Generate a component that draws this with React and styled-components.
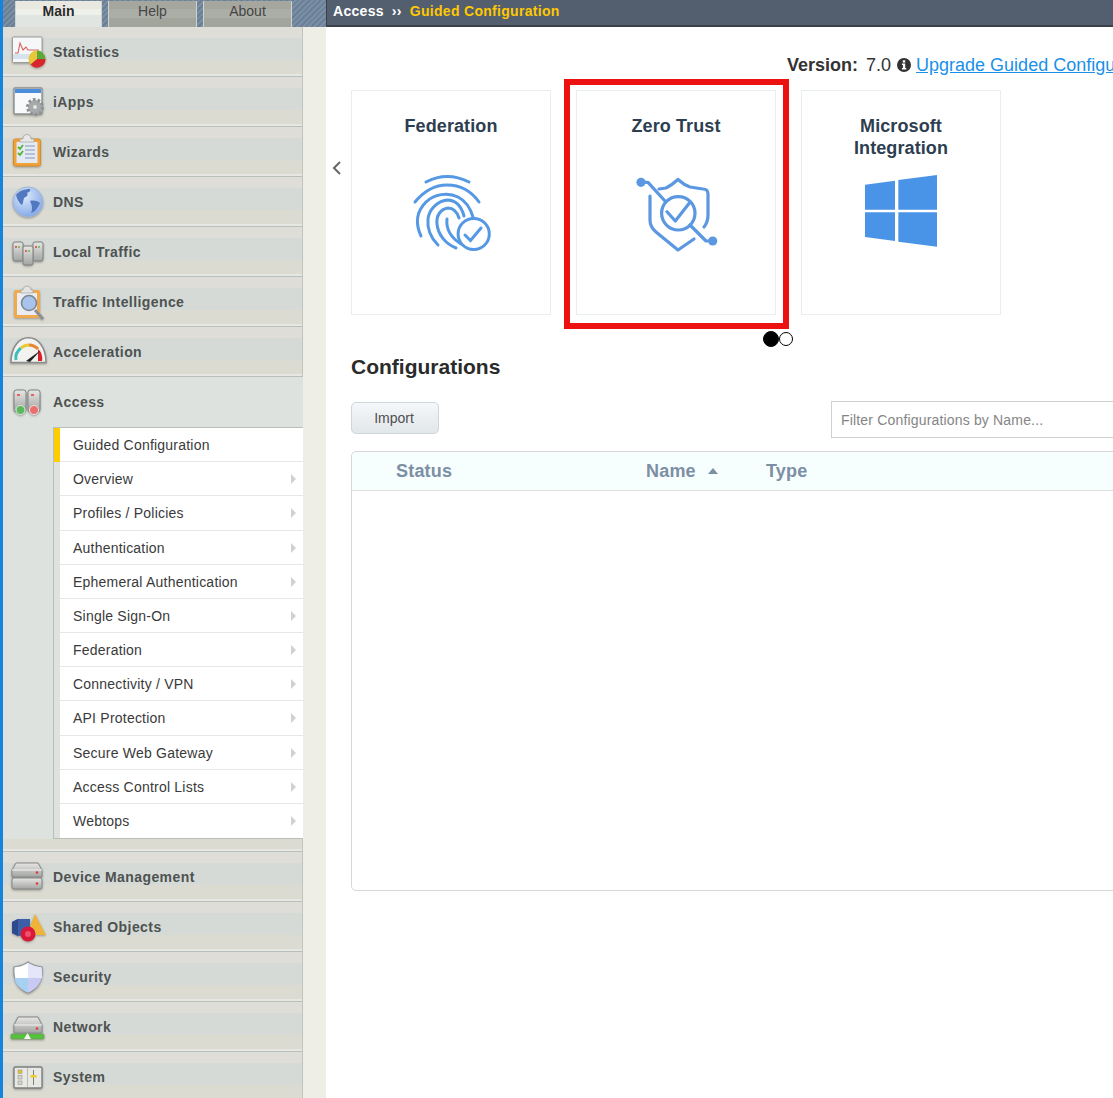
import React from 'react';
import styled, { createGlobalStyle } from 'styled-components';

const Global = createGlobalStyle`
  html, body { margin: 0; padding: 0; background: #fff; }
  body { font-family: "Liberation Sans", Arial, sans-serif; }
  * { box-sizing: border-box; }
`;

const Page = styled.div`
  display: flex;
  width: 1113px;
  height: 1098px;
  overflow: hidden;
`;

const Sidebar = styled.aside`
  flex: 0 0 326px;
  display: flex;
  flex-direction: column;
  height: 100%;
  overflow: hidden;
  background: #eeeee6;
  border-left: 3px solid #1484dd;
`;

const TabBar = styled.div`
  flex: 0 0 27px;
  display: flex;
  gap: 6px;
  padding: 1px 0 0 12px;
  background: repeating-linear-gradient(135deg, #6b8097 0 2px, #7a8ea4 2px 4px);
`;

const Tab = styled.div`
  width: ${p => p.$w}px;
  height: 26px;
  display: flex;
  align-items: center;
  justify-content: center;
  font-size: 14px;
  padding-bottom: 6px;
  border-left: 1px solid #cfd3cf;
  border-right: 1px solid #cfd3cf;
  color: ${p => (p.$active ? '#2b2b2b' : '#454545')};
  font-weight: ${p => (p.$active ? 700 : 400)};
  background: ${p =>
    p.$active
      ? 'linear-gradient(#e9e9e2 0 30%, #eef0ea 30% 55%, #e1e5e1 55%)'
      : 'linear-gradient(#a5a69e 0 30%, #abaea6 30% 65%, #a2a59c 65%)'};
`;

const Nav = styled.nav`
  width: 300px;
  display: flex;
  flex-direction: column;
`;

const Row = styled.div`
  flex: 0 0 50px;
  height: 50px;
  display: flex;
  align-items: center;
  gap: 1px;
  padding-left: 5px;
  border-right: 1px solid #bfc4bf;
  border-bottom: 1px solid #b9bfba;
  box-shadow: inset 0 -2px 0 #e6e7e2;
  background: ${p =>
    p.$open
      ? '#dde2de'
      : 'linear-gradient(#dfddd8 0 11px, #d5dad7 11px 33px, #dbdbd2 33px)'};
  ${p => p.$open && 'border-bottom: none; box-shadow: none; border-right: none;'}
`;

const IconFrame = styled.svg`
  flex: 0 0 44px;
  width: 44px;
  height: 44px;
  filter: drop-shadow(0 1px 1px rgba(0, 0, 0, 0.3));
`;

const RowLabel = styled.span`
  font-size: 14px;
  font-weight: 700;
  letter-spacing: 0.42px;
  color: #4e5250;
  white-space: nowrap;
`;

const Group = styled.div`
  display: flex;
  flex-direction: column;
  background: #dde2de;
`;

const SubMenu = styled.ul`
  list-style: none;
  margin: 0 0 0 50px;
  padding: 0;
  height: 412px;
  display: flex;
  flex-direction: column;
  border-left: 1px solid #b9bfba;
  border-top: 1px solid #b9bfba;
  border-bottom: 1px solid #b9bfba;
`;

const SubItem = styled.li`
  flex: 1;
  display: flex;
  align-items: center;
  justify-content: space-between;
  padding: 0 7px 0 13px;
  font-size: 14px;
  letter-spacing: 0.22px;
  color: #3a3a3a;
  background: #fff;
  border-left: 6px solid ${p => (p.$active ? '#ffcc00' : '#dde2de')};
  box-shadow: inset 0 -1px 0 #e6e8e6;
  &:last-child { box-shadow: none; }
`;

const SubArrow = styled.span`
  width: 0;
  height: 0;
  border-left: 5px solid #cfd2d0;
  border-top: 5px solid transparent;
  border-bottom: 5px solid transparent;
`;

const GroupFoot = styled.div`
  height: 13px;
  background: #dbdbd2;
  border-bottom: 1px solid #b9bfba;
  box-shadow: inset 0 -2px 0 #e6e7e2;
  border-right: 1px solid #bfc4bf;
`;

const Main = styled.main`
  flex: 1;
  min-width: 0;
  display: flex;
  flex-direction: column;
  overflow: hidden;
`;

const Crumbs = styled.div`
  flex: 0 0 27px;
  display: flex;
  align-items: center;
  gap: 8px;
  padding: 0 0 3px 6px;
  background: #535f6f;
  border-bottom: 2px solid #3b4148;
  border-left: 1px solid #3b4148;
  font-size: 14px;
  font-weight: 700;
  letter-spacing: 0.3px;
  color: #fff;
  white-space: nowrap;
`;

const CrumbActive = styled.span`
  color: #ffc800;
`;

const VersionRow = styled.div`
  display: flex;
  align-items: center;
  gap: 6px;
  height: 63px;
  padding: 13px 0 0 461px;
  font-size: 18px;
  color: #333;
  white-space: nowrap;
`;

const VersionLabel = styled.b`
  font-weight: 700;
  margin-right: 2px;
`;

const InfoIcon = styled.svg`
  flex: 0 0 14px;
  width: 14px;
  height: 14px;
`;

const UpgradeLink = styled.a`
  flex: none;
  margin-left: -1px;
  color: #1a90e8;
  text-decoration: underline;
`;

const Carousel = styled.div`
  display: flex;
`;

const Chevron = styled.svg`
  flex: 0 0 25px;
  width: 25px;
  height: 20px;
  margin-top: 68px;
`;

const Cards = styled.div`
  display: flex;
  gap: 25px;
`;

const Card = styled.div`
  position: relative;
  width: 200px;
  height: 225px;
  padding-top: 24px;
  display: flex;
  flex-direction: column;
  align-items: center;
  border: 1px solid #e8eeee;
  ${p =>
    p.$flagged &&
    `&::after {
      content: "";
      position: absolute;
      left: -13px; right: -14px; top: -12px; bottom: -15px;
      border: 6px solid #ec1212;
    }`}
`;

const CardTitle = styled.h3`
  margin: 0;
  width: 150px;
  height: 44px;
  font-size: 18px;
  line-height: 22px;
  font-weight: 700;
  letter-spacing: 0.1px;
  color: #2d3e50;
  text-align: center;
`;

const CardIcon = styled.svg`
  width: 100px;
  height: 95px;
  margin-top: 6px;
`;

const Dots = styled.div`
  display: flex;
  align-items: center;
  height: 16px;
  margin-top: 16px;
  padding-left: 437px;
`;

const Dot = styled.span`
  width: ${p => (p.$on ? 16 : 14)}px;
  height: ${p => (p.$on ? 16 : 14)}px;
  border-radius: 50%;
  background: ${p => (p.$on ? '#000' : '#fff')};
  border: 1px solid #000;
`;

const Panel = styled.section`
  width: 820px;
  margin-left: 25px;
`;

const Heading = styled.h2`
  margin: 7px 0 0;
  height: 26px;
  font-size: 21px;
  line-height: 26px;
  font-weight: 700;
  color: #2b2b2b;
`;

const Toolbar = styled.div`
  display: flex;
  justify-content: space-between;
  align-items: flex-start;
  margin-top: 21px;
  height: 50px;
`;

const ImportButton = styled.button`
  width: 88px;
  height: 32px;
  margin-top: 1px;
  padding: 0 2px 0 0;
  border: 1px solid #cfd6da;
  border-radius: 5px;
  background: linear-gradient(#f5f7f9, #e2e7ea);
  font: 14px "Liberation Sans", Arial, sans-serif;
  color: #4f4f4f;
`;

const FilterInput = styled.input`
  width: 340px;
  height: 37px;
  padding: 0 9px;
  border: 1px solid #d0d0d0;
  font: 14px "Liberation Sans", Arial, sans-serif;
  letter-spacing: 0.17px;
  &::placeholder { color: #858585; opacity: 1; }
`;

const Table = styled.div`
  height: 440px;
  border: 1px solid #d6d8d8;
  border-radius: 5px;
`;

const TableHead = styled.div`
  display: grid;
  grid-template-columns: 250px 120px 1fr;
  align-items: center;
  height: 39px;
  padding-left: 44px;
  background: #f7fefe;
  border-bottom: 1px solid #dcdfdf;
  border-radius: 5px 5px 0 0;
  font-size: 18px;
  font-weight: 700;
  letter-spacing: 0.2px;
  color: #7c8fa4;
`;

const HeadCell = styled.span`
  display: flex;
  align-items: center;
  gap: 12px;
`;

const SortUp = styled.i`
  width: 0;
  height: 0;
  border-left: 5.5px solid transparent;
  border-right: 5.5px solid transparent;
  border-bottom: 6px solid #7c8fa4;
`;

const Fingerprint = () => (
  <CardIcon viewBox="0 0 100 95" fill="none" stroke="#5598e4" strokeWidth="3" strokeLinecap="round">
    <path d="M25 17Q46 6 68 17" />
    <path d="M14 37Q28 20 46 20Q66 20 78 37" />
    <path d="M20 71C14 58 16 46 25 37C33 29 47 27 57 32C65 36 69 42 72 52" />
    <path d="M37 80C30 73 26 64 27 54C28 44 37 36 46 35C54 35 60 40 63 51" />
    <path d="M55 83C45 79 37 70 36 59C35 50 40 44 47 43C52 43 56 47 58 53" />
    <path d="M46 54C45 63 49 72 60 79" />
    <circle cx="72.7" cy="69" r="15.6" fill="#fff" />
    <path d="M64 70L69.5 75.5L80 63" />
  </CardIcon>
);

const ZeroTrust = () => (
  <CardIcon viewBox="0 0 100 95" fill="none" stroke="#5c97e2" strokeWidth="3.2" strokeLinecap="round" strokeLinejoin="round">
    <path d="M15 17.3L22 17.3L39 36" />
    <path d="M33 24L40 23Q46 20 52 14.5Q58 20 64 22L77 24Q82 24 82 29L82 50Q82 57 78 62" />
    <path d="M24 31L24 55Q24 62 30 67L52 85L68 74" />
    <circle cx="52.3" cy="48.3" r="16.7" />
    <path d="M41 46.7L49.3 56L64 37.3" />
    <path d="M64 60L80 76L87 76" />
    <circle cx="15" cy="17.3" r="4.6" fill="#5c97e2" stroke="none" />
    <circle cx="86.7" cy="76" r="4.6" fill="#5c97e2" stroke="none" />
  </CardIcon>
);

const Windows = () => (
  <CardIcon viewBox="0 -30 300 285" fill="#4a94e8">
    <polygon points="42,29 132,17 132,104 42,104" />
    <polygon points="142,15 258,0 258,104 142,104" />
    <polygon points="42,112 132,112 132,198 42,186" />
    <polygon points="142,112 258,112 258,215 142,200" />
  </CardIcon>
);

const MetalGrad = ({ id }) => (
  <linearGradient id={id} x1="0" y1="0" x2="0" y2="1">
    <stop offset="0" stopColor="#e6e6e4" />
    <stop offset="1" stopColor="#a3a5a3" />
  </linearGradient>
);

const icons = {
  statistics: (
    <>
      <rect x="4.5" y="7" width="29.5" height="25.5" rx="1" fill="#f6f7f8" stroke="#9a9c9a" />
      <rect x="5" y="24" width="29" height="5" fill="#d6e3ee" />
      <path d="M7 23L10 23L12 13L15 20L18 17L20 20L31 20" fill="none" stroke="#d9605e" strokeWidth="1.1" />
      <circle cx="29" cy="29" r="8.5" fill="#e8c83a" />
      <path d="M29 29L29 20.5A8.5 8.5 0 0 1 37.5 29Z" fill="#5da83c" />
      <path d="M29 29L37.5 29A8.5 8.5 0 0 1 22.5 34.5Z" fill="#d8262f" />
    </>
  ),
  iapps: (
    <>
      <rect x="6" y="8" width="28" height="26" rx="1" fill="#f8f9fb" stroke="#8d8f8f" strokeWidth="1.4" />
      <rect x="7" y="9" width="26" height="4" fill="#4b8fdc" />
      <circle cx="27" cy="27" r="7" fill="#a6aaaa" stroke="#8f9292" strokeWidth="4" strokeDasharray="2.5 1.9" />
      <circle cx="27" cy="27" r="6" fill="#a6aaaa" />
      <circle cx="27" cy="27" r="2" fill="#e4e6e6" />
    </>
  ),
  wizards: (
    <>
      <rect x="5.5" y="9" width="27" height="27" rx="2" fill="#f0a238" stroke="#d98d28" />
      <rect x="8.5" y="12" width="21" height="21" fill="#e4eaf3" />
      <path d="M15 9C15 3 23 3 23 9L26 9L26 12L12 12L12 9Z" fill="#e8e8e6" stroke="#a5a5a5" strokeWidth=".7" />
      <path d="M10 17L12 19L15 15M10 23L12 25L15 21" fill="none" stroke="#53b32a" strokeWidth="1.8" />
      <path d="M17 16H27M17 20H27M17 24H27M17 28H27" stroke="#a5b3cb" strokeWidth="1.4" />
    </>
  ),
  dns: (
    <>
      <defs>
        <radialGradient id="globe" cx=".4" cy=".3" r=".8">
          <stop offset="0" stopColor="#dbe8fb" />
          <stop offset="1" stopColor="#7ba3e6" />
        </radialGradient>
      </defs>
      <circle cx="20" cy="22" r="15" fill="url(#globe)" stroke="#a2b6d6" />
      <path d="M8 15C11 11 16 9 22 9C23 11 21 12 19 13C21 15 18 17 16 18C15 21 15 24 14 25C11 23 9 19 8 15Z" fill="#5278c0" />
      <path d="M22 21C26 20 30 21 32 23C31 26 29 28 27 31C25 32 24 33 23 33C25 29 24 25 22 21Z" fill="#5278c0" />
    </>
  ),
  traffic: (
    <>
      <defs><MetalGrad id="m1" /></defs>
      <rect x="5" y="12" width="10" height="19" rx="2" fill="url(#m1)" stroke="#7f8280" />
      <rect x="25" y="12" width="10" height="19" rx="2" fill="url(#m1)" stroke="#7f8280" />
      <rect x="15" y="16" width="10" height="19" rx="2" fill="url(#m1)" stroke="#7f8280" />
      <path d="M7 17h2M27 17h2M17 21h2" stroke="#e0413f" strokeWidth="1.6" />
      <path d="M10 17h2M30 17h2M20 21h2" stroke="#5fbf46" strokeWidth="1.6" />
    </>
  ),
  intel: (
    <>
      <rect x="6" y="10" width="26" height="28" rx="2" fill="#f0a94e" />
      <rect x="9" y="13" width="20" height="22" fill="#e9edf3" />
      <path d="M15 10C15 5 23 5 23 10L25 10L25 13L13 13L13 10Z" fill="#e4e4e2" stroke="#a5a5a5" strokeWidth=".7" />
      <path d="M27 30L35 39" stroke="#8b9096" strokeWidth="3" />
      <circle cx="21" cy="23" r="7.5" fill="#a8c4ec" stroke="#7d8791" strokeWidth="1.6" />
    </>
  ),
  accel: (
    <>
      <path d="M3 33C3 -0 38 -0 38 33Z" fill="#f2f2f0" stroke="#8b8d8b" strokeWidth="1.5" transform="translate(0 -.5)" />
      <path d="M8 30A12.5 12.5 0 0 1 13 18" fill="none" stroke="#38c0b8" strokeWidth="3" />
      <path d="M13 18A12.5 12.5 0 0 1 21 15" fill="none" stroke="#e8cc36" strokeWidth="3" />
      <path d="M21 15A12.5 12.5 0 0 1 30 19" fill="none" stroke="#e8862f" strokeWidth="3" />
      <path d="M30 19A13 13 0 0 1 34 31L30 31Z" fill="#d8222a" />
      <path d="M18 31L33 20L22 32Z" fill="#222" />
    </>
  ),
  access: (
    <>
      <defs><MetalGrad id="m2" /></defs>
      <rect x="6" y="10" width="12" height="22" rx="2.5" fill="url(#m2)" stroke="#7f8280" />
      <rect x="20" y="10" width="12" height="22" rx="2.5" fill="url(#m2)" stroke="#7f8280" />
      <path d="M9 15h3M23 15h3" stroke="#e0413f" strokeWidth="1.4" />
      <circle cx="12.5" cy="30" r="4.5" fill="#5cb85c" stroke="#dfe8df" />
      <circle cx="26" cy="30" r="4.5" fill="#e8706c" stroke="#f0dfdd" />
    </>
  ),
  device: (
    <>
      <defs><MetalGrad id="m3" /></defs>
      <path d="M4 15L8 8L30 8L34 15L34 22L4 22Z" fill="url(#m3)" stroke="#868886" />
      <path d="M4 15H34" stroke="#f3f3f2" />
      <rect x="4" y="23" width="30" height="11" rx="2" fill="url(#m3)" stroke="#868886" />
      <circle cx="29" cy="17.5" r="1.3" fill="#e03a38" />
      <circle cx="29" cy="28.5" r="1.3" fill="#e03a38" />
    </>
  ),
  shared: (
    <>
      <path d="M27 9L38 30L19 30Z" fill="#efb33a" />
      <path d="M4 17L10 14L22 14L22 30L10 31L4 28Z" fill="#3d5fa8" />
      <path d="M4 17L10 14L10 31L4 28Z" fill="#2d4a8c" />
      <circle cx="20" cy="29" r="7.5" fill="#d8183a" />
      <circle cx="20" cy="29" r="3" fill="#f0506a" />
    </>
  ),
  security: (
    <>
      <path d="M20 7C15 11 11 11 6 12C5 24 8 33 20 38C32 33 35 24 34 12C29 11 25 11 20 7Z" fill="#fff" stroke="#8d9499" strokeWidth="1.2" />
      <path d="M20 8V23H34C34 17 34 14 33 12.5C28 11.5 25 11 20 8Z" fill="#e6e6fa" />
      <path d="M20 23H6.5C7.5 30 12 34 20 37.5Z" fill="#a8d0f0" />
      <path d="M20 23V37.5C28 34 32 29 33.5 23Z" fill="#c8caf4" />
    </>
  ),
  network: (
    <>
      <defs><MetalGrad id="m4" /></defs>
      <path d="M6 20L10 12L30 12L34 20L34 28L6 28Z" fill="url(#m4)" stroke="#868886" />
      <path d="M6 20H34" stroke="#f3f3f2" />
      <circle cx="29" cy="23.5" r="1.3" fill="#e03a38" />
      <rect x="3" y="29" width="33" height="5" rx="1" fill="#55c23c" stroke="#6d9a5f" strokeWidth=".7" />
      <path d="M16 34L19.5 28L23 34Z" fill="#f4f4f2" />
    </>
  ),
  system: (
    <>
      <rect x="6" y="12" width="28" height="21" rx="1.5" fill="#e8e8e4" stroke="#7e807e" strokeWidth="1.4" />
      <path d="M19.5 13V32" stroke="#b9bab6" />
      <rect x="10" y="15" width="4" height="3.5" fill="#e6c23a" stroke="#8b8b80" strokeWidth=".5" />
      <rect x="10" y="20.5" width="4" height="3.5" fill="#d4d4cc" stroke="#8b8b80" strokeWidth=".5" />
      <rect x="10" y="26" width="4" height="3.5" fill="#d4d4cc" stroke="#8b8b80" strokeWidth=".5" />
      <path d="M25.5 15V30" stroke="#7e807e" />
      <rect x="22.5" y="20" width="6" height="2.6" fill="#eccb2e" />
    </>
  ),
};

const NavIcon = ({ name }) => <IconFrame viewBox="0 0 44 44">{icons[name]}</IconFrame>;

const NavRow = ({ icon, label, open }) => (
  <Row $open={open}>
    <NavIcon name={icon} />
    <RowLabel>{label}</RowLabel>
  </Row>
);

const before = [
  ['statistics', 'Statistics'],
  ['iapps', 'iApps'],
  ['wizards', 'Wizards'],
  ['dns', 'DNS'],
  ['traffic', 'Local Traffic'],
  ['intel', 'Traffic Intelligence'],
  ['accel', 'Acceleration'],
];

const after = [
  ['device', 'Device Management'],
  ['shared', 'Shared Objects'],
  ['security', 'Security'],
  ['network', 'Network'],
  ['system', 'System'],
];

const subItems = [
  'Overview',
  'Profiles / Policies',
  'Authentication',
  'Ephemeral Authentication',
  'Single Sign-On',
  'Federation',
  'Connectivity / VPN',
  'API Protection',
  'Secure Web Gateway',
  'Access Control Lists',
  'Webtops',
];

export default function App() {
  return (
    <Page>
      <Global />
      <Sidebar>
        <TabBar>
          <Tab $w={87} $active>Main</Tab>
          <Tab $w={89}>Help</Tab>
          <Tab $w={89}>About</Tab>
        </TabBar>
        <Nav>
          {before.map(([icon, label]) => (
            <NavRow key={label} icon={icon} label={label} />
          ))}
          <Group>
            <NavRow icon="access" label="Access" open />
            <SubMenu>
              <SubItem $active>Guided Configuration</SubItem>
              {subItems.map(label => (
                <SubItem key={label}>
                  {label}
                  <SubArrow />
                </SubItem>
              ))}
            </SubMenu>
            <GroupFoot />
          </Group>
          {after.map(([icon, label]) => (
            <NavRow key={label} icon={icon} label={label} />
          ))}
        </Nav>
      </Sidebar>
      <Main>
        <Crumbs>
          <span>Access</span>
          <span>››</span>
          <CrumbActive>Guided Configuration</CrumbActive>
        </Crumbs>
        <VersionRow>
          <VersionLabel>Version:</VersionLabel>
          <span>7.0</span>
          <InfoIcon viewBox="0 0 16 16">
            <circle cx="8" cy="8" r="8" fill="#333" />
            <rect x="6.6" y="2.6" width="2.8" height="2.6" fill="#fff" />
            <path d="M5.6 6.4H9.4V11.4H10.6V13H5.6V11.4H6.8V8H5.6Z" fill="#fff" />
          </InfoIcon>
          <UpgradeLink href="#">Upgrade Guided Configuration</UpgradeLink>
        </VersionRow>
        <Carousel>
          <Chevron viewBox="0 0 25 20">
            <path d="M14 4L8 10L14 16" fill="none" stroke="#666" strokeWidth="2" />
          </Chevron>
          <Cards>
            <Card>
              <CardTitle>Federation</CardTitle>
              <Fingerprint />
            </Card>
            <Card $flagged>
              <CardTitle>Zero Trust</CardTitle>
              <ZeroTrust />
            </Card>
            <Card>
              <CardTitle>Microsoft Integration</CardTitle>
              <Windows />
            </Card>
          </Cards>
        </Carousel>
        <Dots>
          <Dot $on />
          <Dot />
        </Dots>
        <Panel>
          <Heading>Configurations</Heading>
          <Toolbar>
            <ImportButton>Import</ImportButton>
            <FilterInput placeholder="Filter Configurations by Name..." />
          </Toolbar>
          <Table>
            <TableHead>
              <HeadCell>Status</HeadCell>
              <HeadCell>Name <SortUp /></HeadCell>
              <HeadCell>Type</HeadCell>
            </TableHead>
          </Table>
        </Panel>
      </Main>
    </Page>
  );
}
